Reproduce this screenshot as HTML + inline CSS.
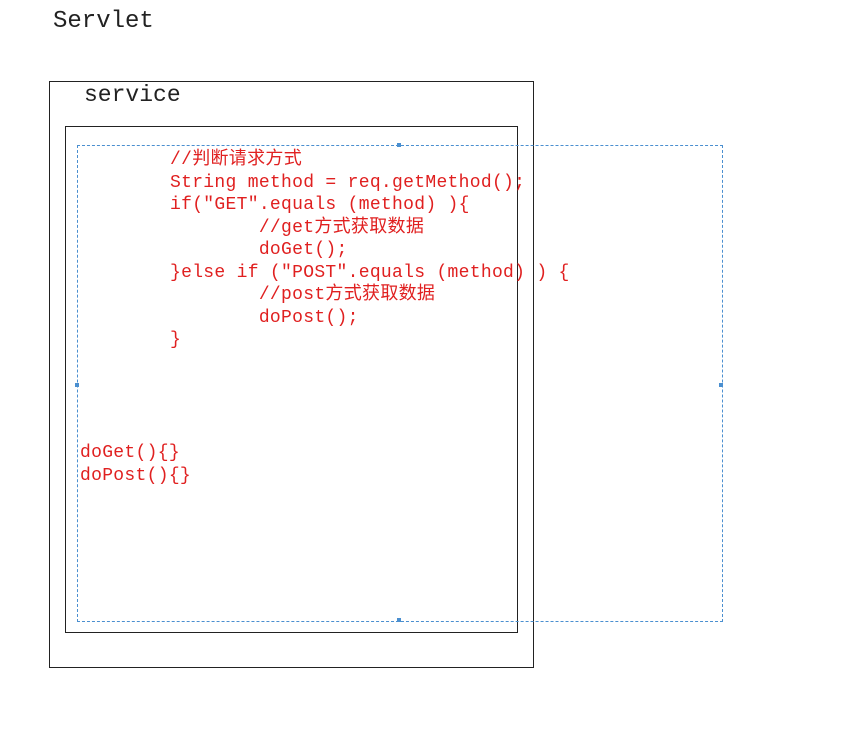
<!DOCTYPE html>
<html><head><meta charset="utf-8"><style>
body{margin:0;width:860px;height:744px;background:#fff;position:relative;overflow:hidden;font-family:"Liberation Mono","Noto Sans CJK SC",monospace}
.a{position:absolute}
.t{position:absolute;color:#e02020;font-size:18px;white-space:pre;line-height:22.5px;letter-spacing:0.3px}
</style></head><body>
<div class="a" style="left:53px;top:8px;font-size:24px;color:#222">Servlet</div>
<div class="a" style="left:49px;top:81px;width:483px;height:585px;border:1px solid #222"></div>
<div class="a" style="left:84px;top:82px;font-size:23px;color:#222">service</div>
<div class="a" style="left:65px;top:126px;width:451px;height:505px;border:1px solid #222"></div>
<div class="a" style="left:77px;top:145px;width:644px;height:475px;border:1px dashed #4a8fd0"></div>
<div class="a" style="left:397px;top:143px;width:4px;height:4px;background:#4a8fd0"></div>
<div class="a" style="left:397px;top:618px;width:4px;height:4px;background:#4a8fd0"></div>
<div class="a" style="left:75px;top:383px;width:4px;height:4px;background:#4a8fd0"></div>
<div class="a" style="left:719px;top:383px;width:4px;height:4px;background:#4a8fd0"></div>
<div class="t" style="left:170px;top:149px">//判断请求方式
String method = req.getMethod();
if("GET".equals (method) ){
        //get方式获取数据
        doGet();
}else if ("POST".equals (method) ) {
        //post方式获取数据
        doPost();
}</div>
<div class="t" style="left:80px;top:442px">doGet(){}
doPost(){}</div>
</body></html>
